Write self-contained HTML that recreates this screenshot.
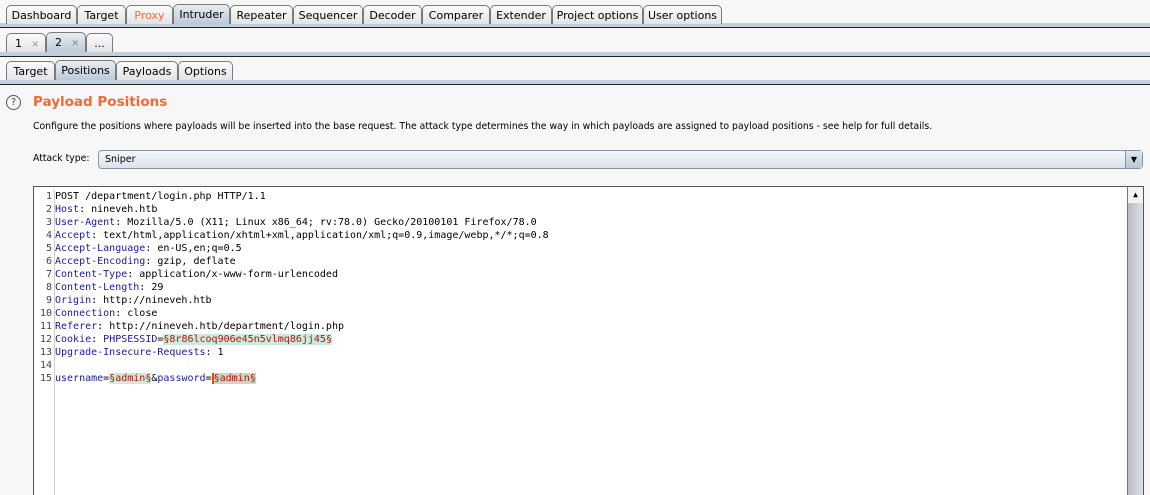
<!DOCTYPE html>
<html style="overflow:hidden;height:495px"><head><style>
body{margin:0;width:1150px;height:495px;background:#f7f7f7;font-family:"DejaVu Sans",sans-serif;font-size:11px;color:#000;position:relative;overflow:hidden}
.t{position:absolute;height:19px;border:1px solid #7a7a7a;border-bottom:none;border-radius:5px 5px 0 0;background:linear-gradient(#fbfbfb,#e4e4e8);box-sizing:border-box;text-align:center;line-height:19px;font-size:11px}
.s{background:linear-gradient(#e8edf3,#bcc9d8)}
.bar{position:absolute;left:0;width:1150px;box-sizing:border-box}
.a{position:absolute}
.code{position:absolute;left:33px;top:186px;width:1111px;height:312px;background:#fff;border:1px solid #555;box-sizing:border-box;font-family:"DejaVu Sans Mono",monospace;font-size:10px;line-height:13px}
.gut{position:absolute;left:0;top:3px;width:18px;text-align:right;color:#444;border-right:1px solid #ccc;height:320px;padding-right:2px}
.txt{position:absolute;left:21px;top:3px;white-space:pre}
.k{color:#1a1aa6}.r{color:#c01010}.h{background:#c9ecdc;color:#c01010}
</style></head><body>
<div class="bar" style="top:23px;height:5px;background:#c2cfdd;border-bottom:1px solid #222"></div>
<div class="t" style="left:6px;top:5px;width:71px">Dashboard</div>
<div class="t" style="left:77px;top:5px;width:49px">Target</div>
<div class="t" style="left:126px;top:5px;width:47px;color:#f06a35">Proxy</div>
<div class="t s" style="left:173px;top:4px;width:57px;height:20px">Intruder</div>
<div class="t" style="left:230px;top:5px;width:63px">Repeater</div>
<div class="t" style="left:293px;top:5px;width:70px">Sequencer</div>
<div class="t" style="left:363px;top:5px;width:59px">Decoder</div>
<div class="t" style="left:422px;top:5px;width:68px">Comparer</div>
<div class="t" style="left:490px;top:5px;width:62px">Extender</div>
<div class="t" style="left:552px;top:5px;width:91px">Project options</div>
<div class="t" style="left:643px;top:5px;width:79px">User options</div>

<div class="bar" style="top:52px;height:5px;background:#c2cfdd;border-bottom:1px solid #222"></div>
<div class="t" style="left:6px;top:33px;width:40px;text-align:left;padding-left:8px">1 <span style="color:#999;font-size:9px;margin-left:6px">✕</span></div>
<div class="t s" style="left:46px;top:32px;width:40px;height:20px;text-align:left;padding-left:8px">2 <span style="color:#888;font-size:9px;margin-left:6px">✕</span></div>
<div class="t" style="left:86px;top:33px;width:27px">...</div>

<div class="bar" style="top:80px;height:5px;background:#c2cfdd;border-bottom:1px solid #222"></div>
<div class="t" style="left:6px;top:61px;width:49px">Target</div>
<div class="t s" style="left:55px;top:60px;width:61px;height:20px">Positions</div>
<div class="t" style="left:116px;top:61px;width:62px">Payloads</div>
<div class="t" style="left:178px;top:61px;width:55px">Options</div>

<div class="a" style="left:6px;top:95px;width:15px;height:15px;border:1px solid #555;border-radius:50%;box-sizing:border-box;text-align:center;line-height:13px;font-size:10px;color:#444">?</div>
<div class="a" style="left:33px;top:94px;font-size:13.5px;font-weight:bold;color:#f06a35">Payload Positions</div>
<div class="a" style="left:33px;top:121px;font-size:9.3px">Configure the positions where payloads will be inserted into the base request. The attack type determines the way in which payloads are assigned to payload positions - see help for full details.</div>
<div class="a" style="left:33px;top:153px;font-size:9.3px">Attack type:</div>
<div class="a" style="left:98px;top:150px;width:1045px;height:19px;border:1px solid #8a93a0;border-radius:4px;box-sizing:border-box;background:linear-gradient(#f4f6f9,#dde2ea);font-size:9.5px;line-height:17px;padding-left:6px">Sniper
<div class="a" style="right:0;top:0;width:16px;height:17px;border-left:1px solid #8a93a0;background:linear-gradient(#dde6ef,#b9c7d7);text-align:center;font-size:8px;line-height:17px">▼</div></div>

<div class="code">
<div class="gut">1<br>2<br>3<br>4<br>5<br>6<br>7<br>8<br>9<br>10<br>11<br>12<br>13<br>14<br>15</div>
<div class="txt">POST /department/login.php HTTP/1.1
<span class="k">Host</span>: nineveh.htb
<span class="k">User-Agent</span>: Mozilla/5.0 (X11; Linux x86_64; rv:78.0) Gecko/20100101 Firefox/78.0
<span class="k">Accept</span>: text/html,application/xhtml+xml,application/xml;q=0.9,image/webp,*/*;q=0.8
<span class="k">Accept-Language</span>: en-US,en;q=0.5
<span class="k">Accept-Encoding</span>: gzip, deflate
<span class="k">Content-Type</span>: application/x-www-form-urlencoded
<span class="k">Content-Length</span>: 29
<span class="k">Origin</span>: http://nineveh.htb
<span class="k">Connection</span>: close
<span class="k">Referer</span>: http://nineveh.htb/department/login.php
<span class="k">Cookie</span>: <span class="k">PHPSESSID</span>=<span class="h">§8r86lcoq906e45n5vlmq86jj45§</span>
<span class="k">Upgrade-Insecure-Requests</span>: 1

<span class="k">username</span>=<span class="h">§admin§</span>&amp;<span class="k">password</span>=<span class="h" style="background:#c4dcc4;border-left:2px solid #f04010">§admin§</span></div>
<div class="a" style="right:0;top:0;width:15px;height:320px;background:linear-gradient(90deg,#b8bcc4,#dde1e8);border-left:1px solid #777">
<div style="height:16px;background:#f3f3f3;text-align:center;font-size:8px;line-height:16px">▲</div></div>
</div>
</body></html>
